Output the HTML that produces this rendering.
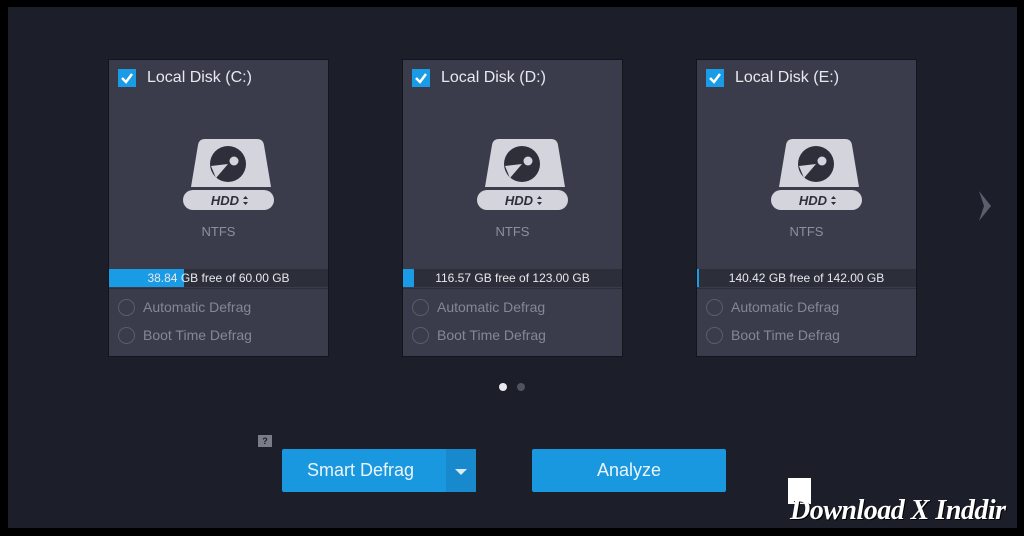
<!DOCTYPE html>
<html><head><meta charset="utf-8"><style>
*{margin:0;padding:0;box-sizing:border-box}
body{width:1024px;height:536px;background:#000;position:relative;overflow:hidden;font-family:"Liberation Sans",sans-serif}
.main{position:absolute;left:8px;top:7px;width:1009px;height:521px;background:#1c1e29}
.card{position:absolute;top:59px;width:221px;height:298px;background:#3a3c4b;border:1px solid #13151c}
.chk{position:absolute;left:9px;top:9px;width:18px;height:18px;background:#1a9be6}
.title{position:absolute;left:38px;top:9px;color:#e8e9ee;font-size:16px}
.icon{position:absolute}
.ntfs{position:absolute;left:0;width:100%;top:164px;text-align:center;color:#8d8f9c;font-size:13px}
.bar{position:absolute;left:0;top:209px;width:100%;height:18px;background:#2c2e3a}
.fill{position:absolute;left:0;top:0;height:18px;background:#1a9be6}
.bt{position:absolute;left:0;width:100%;top:2px;text-align:center;color:#e8e9ee;font-size:12px}
.sep{position:absolute;left:0;top:228px;width:100%;height:1px;background:#2c2e3a}
.opt{position:absolute;left:9px;color:#858794;font-size:14px}
.opt i{display:inline-block;width:17px;height:17px;border:1.5px solid #5a5c6a;border-radius:50%;vertical-align:-4px;margin-right:8px}
.btn{position:absolute;top:449px;height:43px;background:#1a98df;color:#eaf4fb;font-size:18px;border-radius:2px;text-align:center;line-height:43px}
</style></head><body>
<div class="main"></div>
<svg width="0" height="0" style="position:absolute"><defs>
<g id="hdd">
<path d="M22 0 H74 Q80 0 81 6 L88 48 H8 L15 6 Q16 0 22 0Z" fill="#d3d4dc"/>
<rect x="0" y="51" width="91" height="20" rx="10" fill="#d3d4dc"/>
<circle cx="45" cy="25" r="18" fill="#2d2f3a"/>
<path d="M45 25 L28 27 L33 39 Z" fill="#d3d4dc"/>
<circle cx="51" cy="22" r="4.5" fill="#d3d4dc"/>
<text x="42" y="66" font-family="Liberation Sans" font-weight="bold" font-style="italic" font-size="13" fill="#2d2f3a" text-anchor="middle">HDD</text>
<path d="M60 60 l2.5 -3 l2.5 3z M60 63 l2.5 3 l2.5 -3z" fill="#2d2f3a"/>
</g></defs></svg>

<div class="card" style="left:108px">
<div class="chk"><svg width="18" height="18"><path d="M4 9 L8 13 L14 5" stroke="#fff" stroke-width="2.5" fill="none"/></svg></div>
<div class="title">Local Disk (C:)</div>
<svg class="icon" width="92" height="72" style="left:74px;top:79px"><use href="#hdd"/></svg>
<div class="ntfs">NTFS</div>
<div class="bar"><div class="fill" style="width:75px"></div><div class="bt">38.84 GB free of 60.00 GB</div></div>
<div class="sep"></div>
<div class="opt" style="top:239px"><i></i>Automatic Defrag</div>
<div class="opt" style="top:267px"><i></i>Boot Time Defrag</div>
</div>

<div class="card" style="left:402px">
<div class="chk"><svg width="18" height="18"><path d="M4 9 L8 13 L14 5" stroke="#fff" stroke-width="2.5" fill="none"/></svg></div>
<div class="title">Local Disk (D:)</div>
<svg class="icon" width="92" height="72" style="left:74px;top:79px"><use href="#hdd"/></svg>
<div class="ntfs">NTFS</div>
<div class="bar"><div class="fill" style="width:11px"></div><div class="bt">116.57 GB free of 123.00 GB</div></div>
<div class="sep"></div>
<div class="opt" style="top:239px"><i></i>Automatic Defrag</div>
<div class="opt" style="top:267px"><i></i>Boot Time Defrag</div>
</div>

<div class="card" style="left:696px">
<div class="chk"><svg width="18" height="18"><path d="M4 9 L8 13 L14 5" stroke="#fff" stroke-width="2.5" fill="none"/></svg></div>
<div class="title">Local Disk (E:)</div>
<svg class="icon" width="92" height="72" style="left:74px;top:79px"><use href="#hdd"/></svg>
<div class="ntfs">NTFS</div>
<div class="bar"><div class="fill" style="width:2px"></div><div class="bt">140.42 GB free of 142.00 GB</div></div>
<div class="sep"></div>
<div class="opt" style="top:239px"><i></i>Automatic Defrag</div>
<div class="opt" style="top:267px"><i></i>Boot Time Defrag</div>
</div>

<svg style="position:absolute;left:976px;top:188px" width="20" height="36"><path d="M3 3 L15 18 L3 33 L8 18Z" fill="#5c5e6e"/></svg>

<div style="position:absolute;left:499px;top:383px;width:8px;height:8px;border-radius:50%;background:#e8e9ee"></div>
<div style="position:absolute;left:517px;top:383px;width:8px;height:8px;border-radius:50%;background:#50525f"></div>

<div style="position:absolute;left:258px;top:435px;width:14px;height:12px;background:#7a7c88;color:#1c1e29;font-size:9px;text-align:center;line-height:12px;font-weight:bold">?</div>

<div class="btn" style="left:282px;width:194px;text-align:left"><span style="padding-left:25px">Smart Defrag</span>
<div style="position:absolute;right:0;top:0;width:30px;height:43px;background:#1789cc"><svg width="30" height="43"><path d="M9 20 h12 l-6 6z" fill="#dbe9f3"/></svg></div></div>
<div class="btn" style="left:532px;width:194px">Analyze</div>

<div style="position:absolute;left:788px;top:478px;width:23px;height:26px;background:#fff"></div>
<div style="position:absolute;left:790px;top:495px;color:#fff;font-family:'Liberation Serif',serif;font-style:italic;font-weight:bold;font-size:28px;letter-spacing:-0.5px;text-shadow:1px 1px 0 #000">Download X Inddir</div>
</body></html>
